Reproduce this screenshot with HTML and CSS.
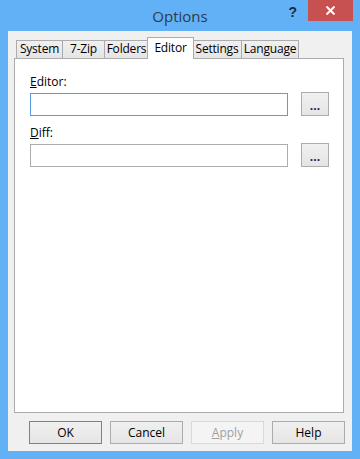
FILE: index.html
```html
<!DOCTYPE html>
<html lang="en">
<head>
  <meta charset="UTF-8" />
  <meta name="viewport" content="width=device-width, initial-scale=1.0"/>
  <title>Options</title>
  <link rel="stylesheet" href="styles.css">
</head>
<body>

  <div class="window">
    <div class="titlebar">
      <span></span>
      <div class="title">Options</div>
      <div class="controls">
        <span class="help">?</span>
        <div class="close">
          <svg width="11" height="9" viewBox="0 0 11 9">
            <path d="M1.5 0.5 L9.5 8.5 M9.5 0.5 L1.5 8.5" stroke="#fff" stroke-width="2" fill="none"/>
          </svg>
        </div>
      </div>
    </div>

    <div class="client">
      <div class="tabs">
        <div class="tab tab-system">System</div>
        <div class="tab tab-zip">7-Zip</div>
        <div class="tab tab-folders">Folders</div>
        <div class="tab tab-editor active">Editor</div>
        <div class="tab tab-settings">Settings</div>
        <div class="tab tab-language">Language</div>
      </div>

      <div class="panel">
        <div class="field-group">
          <label class="field-label" for="editor"><u>E</u>ditor:</label>
          <div class="field-row">
            <input type="text" id="editor" class="field-input focused" />
            <button class="browse">...</button>
          </div>
        </div>
        <div class="field-group">
          <label class="field-label" for="diff"><u>D</u>iff:</label>
          <div class="field-row">
            <input type="text" id="diff" class="field-input" />
            <button class="browse">...</button>
          </div>
        </div>
      </div>

      <div class="actions">
        <button class="btn default">OK</button>
        <button class="btn">Cancel</button>
        <button class="btn" disabled><u>A</u>pply</button>
        <button class="btn">Help</button>
      </div>
    </div>
  </div>

</body>
</html>
```

FILE: styles.css
```css
/* Reset + Font */
body {
  margin: 0;
  font-family: 'Open Sans', 'Noto Sans', sans-serif;
  font-size: 12px;
  color: #000;
}

.window {
  width: 360px;
  height: 459px;
  box-sizing: border-box;
  background: #62b1f6;
  padding: 0 8px 8px 8px;
  display: flex;
  flex-direction: column;
}

/* Title bar */
.titlebar {
  height: 31px;
  margin: 0 -8px;
  display: grid;
  grid-template-columns: 1fr auto 1fr;
}

.title {
  font-size: 15px;
  line-height: 31px;
  color: #2d3a4a;
  padding-top: 1px;
}

.controls {
  justify-self: end;
  align-self: start;
  display: flex;
  align-items: center;
  margin-right: 7px;
}

.help {
  font-family: 'Liberation Sans', sans-serif;
  font-weight: bold;
  font-size: 14px;
  color: #1d2a38;
  margin-right: 11px;
  margin-top: 2px;
}

.close {
  width: 45px;
  height: 21px;
  background: #c75050;
  display: flex;
  align-items: center;
  justify-content: center;
}

/* Client area */
.client {
  flex: 1;
  background: #f0f0f0;
  padding: 6px 8px 0 6px;
  display: flex;
  flex-direction: column;
}

.tabs {
  height: 21px;
  display: flex;
  align-items: flex-end;
  padding-left: 2px;
}

.tab {
  box-sizing: border-box;
  height: 18px;
  line-height: 16px;
  text-align: center;
  letter-spacing: -0.2px;
  border: 1px solid #acacac;
  border-bottom: none;
  background: linear-gradient(#f0f0f0, #e5e5e5);
  margin-left: -1px;
}

.tab:first-child {
  margin-left: 0;
}

.tab-system { width: 47px; }
.tab-zip { width: 43px; }
.tab-folders { width: 45px; }
.tab-editor { width: 47px; }
.tab-settings { width: 50px; }
.tab-language { width: 58px; }

.tab.active {
  position: relative;
  z-index: 1;
  height: 22px;
  line-height: 19px;
  background: #fff;
  margin: 0 -1px -1px -2px;
}

.panel {
  flex: 1;
  background: #fff;
  border: 1px solid #acacac;
  padding: 15px 14px 0 15px;
}

.field-group + .field-group {
  margin-top: 9px;
}

.field-label {
  display: block;
  line-height: 16px;
  margin-bottom: 2px;
}

.field-row {
  display: flex;
  align-items: center;
  gap: 13px;
}

.field-input {
  flex: 1;
  height: 23px;
  box-sizing: border-box;
  border: 1px solid #acacac;
  margin: 0;
  padding: 2px 4px;
  font: inherit;
  outline: none;
}

.field-input.focused {
  border-color: #569de5;
}

.browse,
.btn {
  font: inherit;
  color: #000;
  background: linear-gradient(#f0f0f0, #e5e5e5);
  border: 1px solid #acacac;
  margin: 0;
  padding: 0;
}

.browse {
  width: 28px;
  height: 24px;
  padding-top: 3px;
  font-weight: bold;
  color: #1a1a5a;
}

.actions {
  display: flex;
  justify-content: flex-end;
  gap: 8px;
  margin: 8px -1px 7px 0;
}

.btn {
  width: 73px;
  height: 23px;
}

.btn.default {
  border-color: #3c91e6;
}

.btn:disabled {
  background: #f4f4f4;
  border-color: #d9d9d9;
  color: #a0a0a0;
}
```
